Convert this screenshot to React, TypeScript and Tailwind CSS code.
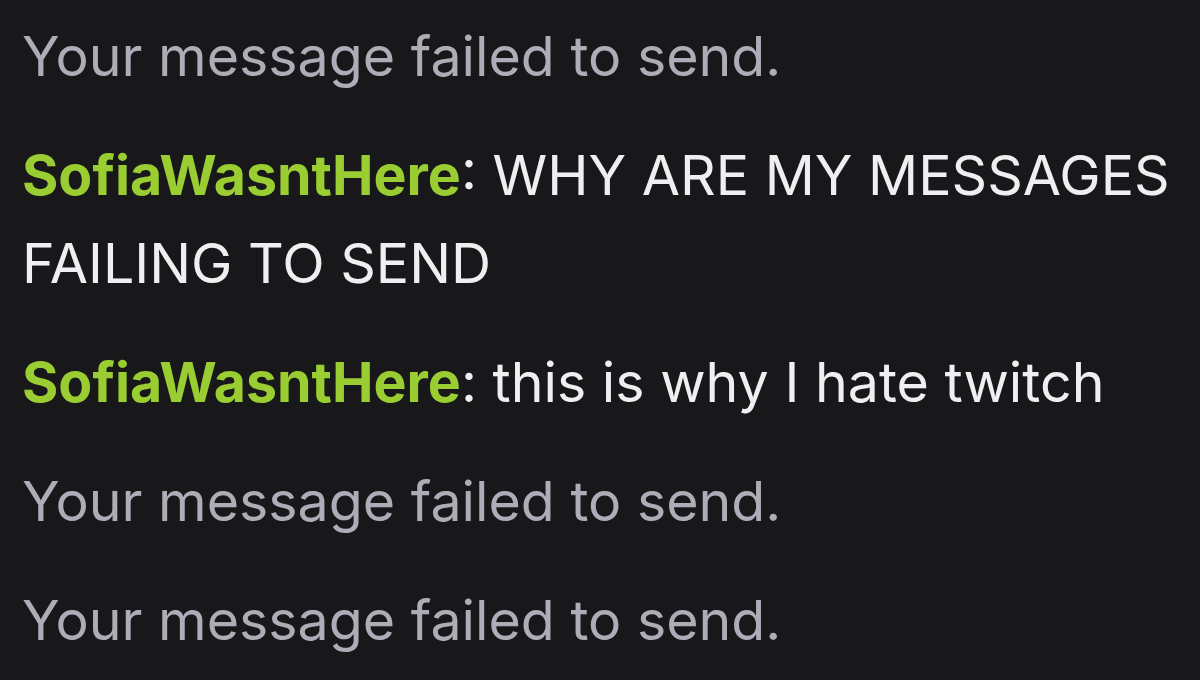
import React from "react";

const Failed = () => (
  <div className="py-[15.5px] pl-[22px] text-[#adadb8]">Your message failed to send.</div>
);

const Msg = ({ text }: { text: string }) => (
  <div className="py-[15.5px] pl-[22px] pr-0 text-[#efeff1]">
    <span className="font-bold text-[#9acd32]">SofiaWasntHere</span>
    <span>: </span>
    <span>{text}</span>
  </div>
);

export default function App() {
  return (
    <div
      className="w-[1200px] h-[680px] overflow-hidden bg-[#18181b] text-[55.5px] leading-[88px]"
      style={{ fontFamily: "Inter, 'Noto Sans', sans-serif" }}
    >
      <div className="-mt-[3.5px]">
        <Failed />
        <Msg text="WHY ARE MY MESSAGES FAILING TO SEND" />
        <Msg text="this is why I hate twitch" />
        <Failed />
        <Failed />
      </div>
    </div>
  );
}
